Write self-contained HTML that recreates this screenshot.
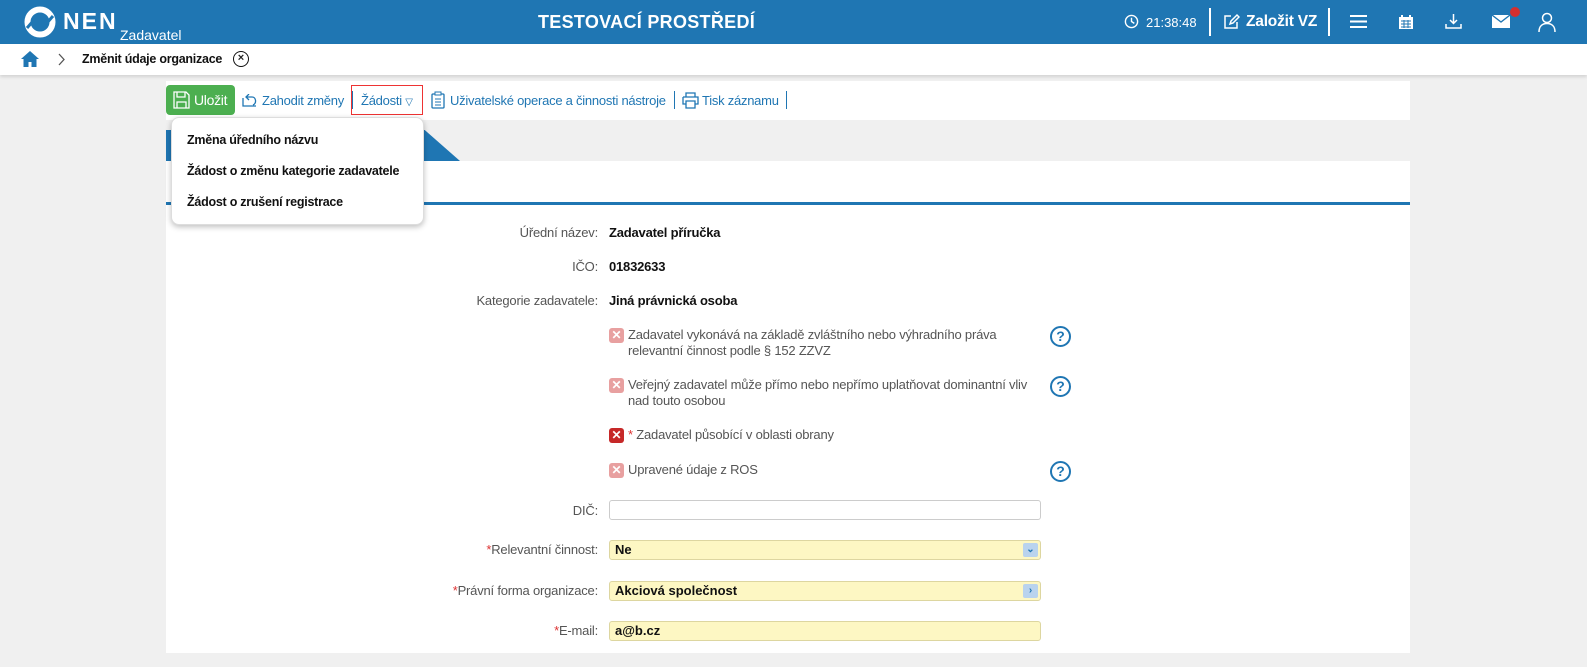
<!DOCTYPE html>
<html><head><meta charset="utf-8"><style>
*{box-sizing:border-box;margin:0;padding:0}
body{width:1587px;height:667px;overflow:hidden;background:#f0f0f0;font-family:"Liberation Sans",Arial,sans-serif;font-size:13px;color:#222;position:relative}
.abs{position:absolute}
#hdr{left:0;top:0;width:1587px;height:44px;background:#1f76b3;color:#fff}
#bc{left:0;top:44px;width:1587px;height:31px;background:#fff;box-shadow:0 2px 3px rgba(0,0,0,.12)}
#tb{left:166px;top:81px;width:1244px;height:39px;background:#fff}
#panel{left:166px;top:161px;width:1244px;height:492px;background:#fff}
.lbl{position:absolute;right:989px;color:#555;text-align:right;letter-spacing:-.2px}
.val{position:absolute;left:609px;font-weight:bold;color:#111;letter-spacing:-.2px}
.req{color:#d33}
.chk{position:absolute;left:609px;width:15px;height:15px;border-radius:3px;background:#e8a0a0;color:#fff;font-size:12px;font-weight:bold;text-align:center;line-height:15px}
.ct{position:absolute;left:628px;color:#555;line-height:16px;letter-spacing:-.2px}
.q{position:absolute;left:1050px;width:21px;height:21px;border:2px solid #1f76b3;border-radius:50%;color:#1f76b3;font-weight:bold;font-size:14px;text-align:center;line-height:17px}
.inp{position:absolute;left:609px;width:432px;height:20px;border:1px solid #ccc;border-radius:3px;background:#fff;font-weight:bold;padding-left:5px;line-height:18px;color:#111}
.y{background:#fdf7c3;border-color:#ddd6a0}
.btn{position:absolute;right:2px;top:2px;width:15px;height:14px;background:#b9d3ee;border-radius:2px;color:#1f76b3;font-size:10px;text-align:center;line-height:14px}
.tl{position:absolute;top:93px;color:#1f76b3;font-size:13px;letter-spacing:-.25px}
.sep{position:absolute;top:91px;width:1px;height:18px;background:#1f76b3}
</style></head><body>
<div id="hdr" class="abs">
 <svg class="abs" style="left:24px;top:6px" width="32" height="32" viewBox="0 0 32 32"><circle cx="16" cy="16" r="12.5" fill="none" stroke="#fff" stroke-width="6"/><path d="M3 22L10 14M29 10L22 18" stroke="#1f76b3" stroke-width="3"/></svg>
 <div class="abs" style="left:63px;top:8px;font-size:23px;font-weight:bold;letter-spacing:2px">NEN</div>
 <div class="abs" style="left:120px;top:27px;font-size:14px">Zadavatel</div>
 <div class="abs" style="left:538px;top:12px;font-size:18px;font-weight:bold;letter-spacing:.3px">TESTOVACÍ PROSTŘEDÍ</div>
 <svg class="abs" style="left:1124px;top:14px" width="15" height="15" viewBox="0 0 16 16"><circle cx="8" cy="8" r="6.5" fill="none" stroke="#fff" stroke-width="1.5"/><path d="M8 4v4l3 2" stroke="#fff" stroke-width="1.5" fill="none"/></svg>
 <div class="abs" style="left:1146px;top:15px;font-size:13px">21:38:48</div>
 <div class="abs" style="left:1209px;top:8px;width:2px;height:28px;background:#fff"></div>
 <svg class="abs" style="left:1222px;top:13px" width="18" height="18" viewBox="0 0 18 18"><path d="M9 3H3v12h12V9M8 11l1-3 6-6 2 2-6 6z" stroke="#fff" stroke-width="1.5" fill="none"/></svg>
 <div class="abs" style="left:1246px;top:13px;font-size:15.5px;font-weight:bold;letter-spacing:-.2px">Založit VZ</div>
 <div class="abs" style="left:1328px;top:8px;width:2px;height:28px;background:#fff"></div>
 <svg class="abs" style="left:1350px;top:14px" width="17" height="15"><path d="M0 2h17M0 7.5h17M0 13h17" stroke="#fff" stroke-width="2"/></svg>
 <svg class="abs" style="left:1398px;top:14px" width="16" height="16" viewBox="0 0 16 16"><rect x="1" y="3" width="14" height="12" fill="#fff"/><path d="M4 1v3M12 1v3" stroke="#fff" stroke-width="2"/><path d="M3 7h10M3 10h10M3 13h10M6 6v8M10 6v8" stroke="#1f76b3" stroke-width="1"/></svg>
 <svg class="abs" style="left:1445px;top:13px" width="17" height="17" viewBox="0 0 17 17"><path d="M8.5 1v9M5 7l3.5 3.5L12 7M1 11v4h15v-4" stroke="#fff" stroke-width="1.5" fill="none"/></svg>
 <svg class="abs" style="left:1492px;top:15px" width="18" height="13" viewBox="0 0 18 13"><rect width="18" height="13" fill="#fff"/><path d="M0 0l9 7 9-7" stroke="#1f76b3" stroke-width="1.3" fill="none"/></svg>
 <div class="abs" style="left:1510px;top:7px;width:10px;height:10px;border-radius:50%;background:#d32f2f"></div>
 <svg class="abs" style="left:1538px;top:12px" width="18" height="20" viewBox="0 0 18 20"><circle cx="9" cy="6" r="4.5" fill="none" stroke="#fff" stroke-width="1.5"/><path d="M1 20c0-6 3.5-8.5 8-8.5s8 2.5 8 8.5" fill="none" stroke="#fff" stroke-width="1.5"/></svg>
</div>
<div id="bc" class="abs">
 <svg class="abs" style="left:21px;top:7px" width="18" height="16" viewBox="0 0 18 16"><path d="M9 0L0 8h2.5v8h5v-5h3v5h5V8H18z" fill="#1f76b3"/></svg>
 <svg class="abs" style="left:58px;top:9px" width="8" height="13"><path d="M1 1l5 5.5L1 12" stroke="#555" fill="none" stroke-width="1.3"/></svg>
 <div class="abs" style="left:82px;top:8px;font-weight:bold;color:#111;font-size:12.5px;letter-spacing:-.25px">Změnit údaje organizace</div>
 <div class="abs" style="left:233px;top:7px;width:16px;height:16px;border:1.5px solid #111;border-radius:50%;font-size:11px;text-align:center;line-height:13px;font-weight:bold">×</div>
</div>
<div id="tb" class="abs"></div>
<div class="abs" style="left:166px;top:85px;width:69px;height:30px;background:#4caf50;border-radius:4px"></div>
<svg class="abs" style="left:173px;top:91px" width="17" height="18" viewBox="0 0 17 18"><path d="M1 1h12l3 3v13H1z M4 1v5h8V1 M4 17v-6h9v6" stroke="#fff" stroke-width="1.3" fill="none"/></svg>
<div class="abs" style="left:194px;top:92px;color:#fff;font-size:14px;letter-spacing:-.3px">Uložit</div>
<svg class="abs" style="left:242px;top:94px" width="17" height="13" viewBox="0 0 17 13"><path d="M1 4v8h13 M4 3h6c4 0 5 6 1 8 M7 0L4 3l3 3" stroke="#1f76b3" stroke-width="1.3" fill="none"/></svg>
<div class="tl" style="left:262px">Zahodit změny</div>
<div class="sep" style="left:352px"></div>
<div class="abs" style="left:351px;top:85px;width:72px;height:30px;border:1px solid #e33"></div>
<div class="tl" style="left:361px">Žádosti <span style="font-size:10px">▽</span></div>
<svg class="abs" style="left:431px;top:91px" width="14" height="18" viewBox="0 0 14 18"><rect x="1" y="3" width="12" height="14" rx="1" fill="none" stroke="#1f76b3" stroke-width="1.3"/><rect x="4" y="1" width="6" height="3" fill="#fff" stroke="#1f76b3"/><path d="M4 8h6M4 11h6M4 14h6" stroke="#1f76b3"/></svg>
<div class="tl" style="left:450px">Uživatelské operace a činnosti nástroje</div>
<div class="sep" style="left:674px"></div>
<svg class="abs" style="left:682px;top:92px" width="17" height="17" viewBox="0 0 17 17"><path d="M4 5V1h9v4 M1 5h15v7h-3 M4 12H1V5 M4 9h9v7H4z" stroke="#1f76b3" stroke-width="1.3" fill="none"/></svg>
<div class="tl" style="left:702px">Tisk záznamu</div>
<div class="sep" style="left:786px"></div>
<div class="abs" style="left:166px;top:130px;width:294px;height:31px;background:#1f76b3;clip-path:polygon(0 0,88% 0,100% 100%,0 100%)"></div>
<div id="panel" class="abs"></div>
<div class="abs" style="left:166px;top:202px;width:1244px;height:3px;background:#1f76b3"></div>
<div class="abs" style="left:171px;top:117px;width:253px;height:108px;background:#fff;border:1px solid #ddd;border-radius:8px;box-shadow:0 2px 6px rgba(0,0,0,.25);letter-spacing:-.25px;font-size:12.5px">
 <div class="abs" style="left:15px;top:15px;font-weight:bold;color:#111">Změna úředního názvu</div>
 <div class="abs" style="left:15px;top:46px;font-weight:bold;color:#111">Žádost o změnu kategorie zadavatele</div>
 <div class="abs" style="left:15px;top:77px;font-weight:bold;color:#111">Žádost o zrušení registrace</div>
</div>
<div class="lbl" style="top:225px">Úřední název:</div><div class="val" style="top:225px">Zadavatel příručka</div>
<div class="lbl" style="top:259px">IČO:</div><div class="val" style="top:259px">01832633</div>
<div class="lbl" style="top:293px">Kategorie zadavatele:</div><div class="val" style="top:293px">Jiná právnická osoba</div>
<div class="chk" style="top:328px">✕</div><div class="ct" style="top:327px">Zadavatel vykonává na základě zvláštního nebo výhradního práva<br>relevantní činnost podle § 152 ZZVZ</div><div class="q" style="top:326px">?</div>
<div class="chk" style="top:378px">✕</div><div class="ct" style="top:377px">Veřejný zadavatel může přímo nebo nepřímo uplatňovat dominantní vliv<br>nad touto osobou</div><div class="q" style="top:376px">?</div>
<div class="chk" style="top:428px;background:#c62828">✕</div><div class="ct" style="top:427px"><span class="req">*</span> Zadavatel působící v oblasti obrany</div>
<div class="chk" style="top:463px">✕</div><div class="ct" style="top:462px">Upravené údaje z ROS</div><div class="q" style="top:461px">?</div>
<div class="lbl" style="top:503px">DIČ:</div><div class="inp" style="top:500px"></div>
<div class="lbl" style="top:542px"><span class="req">*</span>Relevantní činnost:</div><div class="inp y" style="top:540px">Ne<div class="btn">⌄</div></div>
<div class="lbl" style="top:583px"><span class="req">*</span>Právní forma organizace:</div><div class="inp y" style="top:581px">Akciová společnost<div class="btn">›</div></div>
<div class="lbl" style="top:623px"><span class="req">*</span>E-mail:</div><div class="inp y" style="top:621px">a@b.cz</div>
</body></html>
